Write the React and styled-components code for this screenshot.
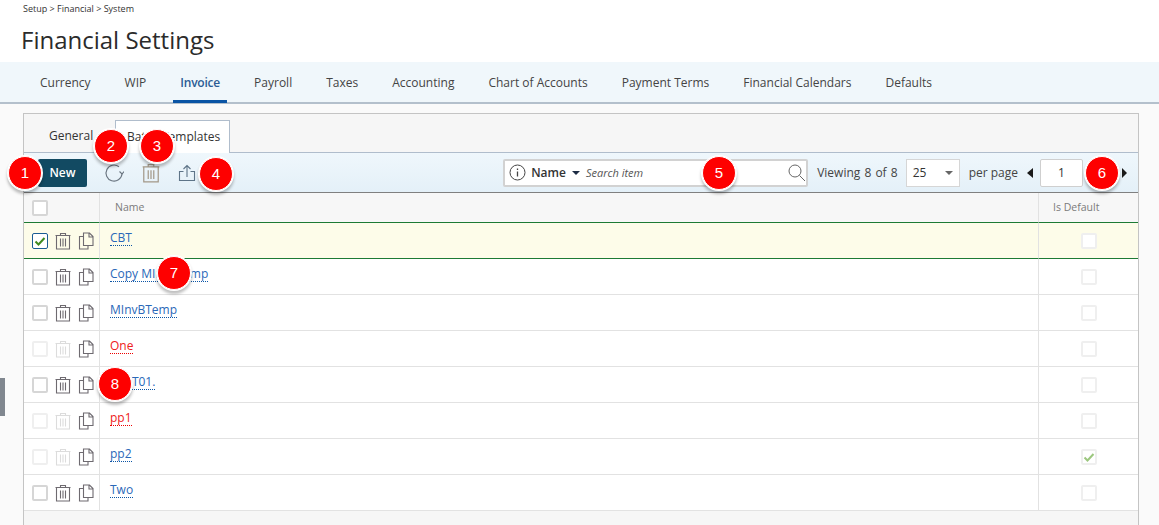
import React from "react";
import styled, { createGlobalStyle } from "styled-components";

const GlobalStyle = createGlobalStyle`
  html, body {
    margin: 0;
    padding: 0;
    background: #fff;
    font-family: "Open Sans", sans-serif;
    color: #333;
    overflow: hidden;
  }
  * { box-sizing: border-box; }
`;

const Page = styled.div`
  position: relative;
  width: 1159px;
  height: 525px;
  overflow: hidden;
`;

const Header = styled.header`
  height: 62px;
  padding: 2px 0 0 21px;
  background: #fff;
`;

const Crumbs = styled.div`
  padding-left: 2px;
  font-size: 9px;
  line-height: 13px;
  color: #333;
`;

const Title = styled.h1`
  margin: 8px 0 0;
  font-size: 24px;
  line-height: 33px;
  font-weight: 400;
  color: #2b2b2b;
`;

const TopNav = styled.nav`
  display: flex;
  height: 42px;
  padding-left: 33px;
  gap: 20px;
  background: #f0f7fb;
  border-bottom: 2px solid #b4c0cc;
`;

const TopItem = styled.div`
  height: 41px;
  padding: 13px 7px 0;
  font-size: 12px;
  line-height: 16px;
  font-weight: ${(p) => (p.$active ? 600 : 400)};
  letter-spacing: ${(p) => (p.$active ? "-0.2px" : "0")};
  color: ${(p) => (p.$active ? "#2b5c94" : "#444")};
  border-bottom: 3px solid ${(p) => (p.$active ? "#0b55a5" : "transparent")};
`;

const Body = styled.div`
  height: 421px;
  padding: 9px 20px 0 23px;
  background: #fafafa;
`;

const Panel = styled.section`
  height: 412px;
  background: #f6f6f6;
  border: 1px solid #c4c4c4;
  border-bottom: none;
`;

const SubTabs = styled.div`
  display: flex;
  height: 38px;
  padding: 6px 0 0 25px;
`;

const SubTab = styled.div`
  height: 32px;
  padding: 8px 0 0;
  font-size: 12px;
  line-height: 16px;
  color: #333;
  width: ${(p) => p.$width}px;
  ${(p) =>
    p.$active &&
    `
    margin-bottom: -1px;
    height: 33px;
    padding-left: 11px;
    background: #fff;
    border: 1px solid #b0bdcc;
    border-bottom: none;
    position: relative;
    z-index: 1;
  `}
`;

const Toolbar = styled.div`
  display: flex;
  align-items: center;
  height: 41px;
  padding: 0 11px 0 14px;
  background: linear-gradient(#eff7fc, #e4f0f8);
  border-top: 1px solid #b0bdcc;
  border-bottom: 1px solid #808080;
`;

const NewButton = styled.button`
  width: 49px;
  height: 28px;
  padding: 0;
  border: none;
  border-radius: 2px;
  background: #124a62;
  color: #fff;
  font: 600 12px "Open Sans", sans-serif;
`;

const ToolIcon = styled.svg`
  flex: none;
  width: 20px;
  height: 20px;
  margin-left: ${(p) => p.$gap}px;
  fill: none;
  stroke: ${(p) => p.$color || "#6a7580"};
  stroke-width: 1.1;
`;

const Spacer = styled.div`
  flex: 1;
`;

const SearchBox = styled.div`
  display: flex;
  align-items: center;
  width: 305px;
  height: 28px;
  padding-left: 4px;
  background: #fff;
  border: 2px solid #d2d2d2;
  border-radius: 2px;
`;

const FieldName = styled.span`
  margin-left: 5px;
  font-size: 12px;
  font-weight: 600;
  color: #333;
`;

const Caret = styled.span`
  display: inline-block;
  width: 0;
  height: 0;
  margin-left: ${(p) => p.$gap || 6}px;
  border-left: 4px solid transparent;
  border-right: 4px solid transparent;
  border-top: 4px solid ${(p) => p.$color || "#1d2c44"};
`;

const SearchText = styled.span`
  flex: 1;
  margin-left: 6px;
  font-size: 11px;
  font-style: italic;
  color: #555;
`;

const Viewing = styled.span`
  margin-left: 9px;
  font-size: 12px;
  word-spacing: 1px;
  color: #444;
`;

const PageSize = styled.div`
  display: flex;
  align-items: center;
  justify-content: space-between;
  width: 54px;
  height: 28px;
  margin-left: 8px;
  padding: 0 6px;
  background: #fff;
  border: 1px solid #d6d6d6;
  font-size: 12px;
  color: #333;
`;

const PerPage = styled.span`
  margin-left: 9px;
  font-size: 12px;
  color: #444;
`;

const Arrow = styled.span`
  flex: none;
  width: 0;
  height: 0;
  margin-left: ${(p) => p.$gap}px;
  border-top: 5px solid transparent;
  border-bottom: 5px solid transparent;
  ${(p) => (p.$left ? "border-right: 6px solid #1a1a1a;" : "border-left: 5px solid #1a1a1a;")}
`;

const PageInput = styled.div`
  width: 43px;
  height: 28px;
  margin-left: 7px;
  background: #fff;
  border: 1px solid #cfcfcf;
  border-radius: 2px;
  text-align: center;
  font-size: 12px;
  line-height: 26px;
  color: #333;
`;

const Grid = styled.div`
  display: grid;
  grid-template-columns: 75px 1fr 100px;
`;

const HeadCell = styled.div`
  height: 29px;
  padding: ${(p) => p.$pad || "6px 0 0 14px"};
  font-size: 10.5px;
  line-height: 16px;
  color: #7b7b7b;
  background: #f7f7f7;
  border-left: ${(p) => (p.$first ? "none" : "1px solid #e2e2e2")};
`;

const Row = styled.div`
  display: contents;
`;

const Cell = styled.div`
  display: flex;
  align-items: center;
  justify-content: ${(p) => p.$justify || "flex-start"};
  height: 36px;
  background: ${(p) => (p.$selected ? "#fdfce9" : "#fff")};
  border-top: 1px solid ${(p) => (p.$selected ? "#1d7a34" : "#e2e2e2")};
  border-left: ${(p) => (p.$first ? "none" : "1px solid #e2e2e2")};
  padding-left: ${(p) => p.$pad || 0}px;
  ${(p) => p.$last && "border-bottom: 1px solid #e2e2e2; height: 37px;"}
  ${(p) => p.$afterSelected && "border-top-color: #1d7a34;"}
`;

const Box = styled.span`
  display: inline-flex;
  align-items: center;
  justify-content: center;
  flex: none;
  width: 16px;
  height: 16px;
  background: #fff;
  border: ${(p) => (p.$checked ? "1px solid #1b5c94" : `2px solid ${p.$dim ? "#efefef" : "#d6d6d6"}`)};
  border-radius: 2px;
`;

const RowIcon = styled.svg`
  flex: none;
  width: 16px;
  height: 18px;
  margin-left: ${(p) => p.$gap}px;
  fill: none;
  stroke: ${(p) => (p.$dim ? "#dcdcdc" : "#6e6a70")};
  stroke-width: 1.1;
`;

const NameLink = styled.span`
  margin-top: -6px;
  font-size: 12px;
  line-height: 15px;
  color: ${(p) => (p.$red ? "#ee2020" : "#2a68b8")};
  border-bottom: 1px dotted ${(p) => (p.$red ? "#ee0000" : "#0b55a5")};
`;

const SideHandle = styled.div`
  position: absolute;
  left: 0;
  top: 378px;
  width: 5px;
  height: 38px;
  background: #80878f;
`;

const Badge = styled.div`
  position: absolute;
  left: ${(p) => p.$x - 17}px;
  top: ${(p) => p.$y - 17}px;
  width: 34px;
  height: 34px;
  border-radius: 50%;
  background: #fe0000;
  border: 1px solid #fff;
  box-shadow: 0 0 0 1px #fff, 0 3px 3px 1px rgba(0, 0, 0, 0.25);
  color: #fff;
  font: 15px/32px "Liberation Sans", sans-serif;
  text-align: center;
  z-index: 5;
`;

const Trash = ({ dim, gap, color, as: Comp = RowIcon }) => (
  <Comp viewBox="0 0 16 18" $dim={dim} $gap={gap} $color={color}>
    <path d="M0.500 3.500h15M5.500 3.500v-2h5v2M1.500 3.500v13.500h13V3.500" />
    <path d="M5.500 6.500v8M8 6.500v8M10.500 6.500v8" />
  </Comp>
);

const Copy = ({ gap }) => (
  <RowIcon viewBox="0 0 16 18" $gap={gap}>
    <path d="M5.500 4.500H1.500v12.500h8.500v-3.500" />
    <path d="M5.500 13.500V1h6l3.500 3.500v9zM11 1v4h4" />
  </RowIcon>
);

const Check = ({ color, size = 12 }) => (
  <svg width={size} height={size} viewBox="0 0 12 12">
    <path d="M1.500 6.500L4.500 9.500L10.500 3" fill="none" stroke={color} strokeWidth="2" />
  </svg>
);

const navItems = ["Currency", "WIP", "Invoice", "Payroll", "Taxes", "Accounting", "Chart of Accounts", "Payment Terms", "Financial Calendars", "Defaults"];

const rows = [
  { name: "CBT", selected: true },
  { name: "Copy MInvBTemp" },
  { name: "MInvBTemp" },
  { name: "One", red: true, dim: true },
  { name: "MIBT01." },
  { name: "pp1", red: true, dim: true },
  { name: "pp2", dim: true, isDefault: true },
  { name: "Two" },
];

const badges = [
  [1, 25, 173], [2, 111, 146], [3, 157, 146], [4, 216, 174], [5, 719, 173], [6, 1102, 173],
  [7, 174, 273], [8, 115, 384],
];

export default function App() {
  return (
    <Page>
      <GlobalStyle />
      <Header>
        <Crumbs>Setup &gt; Financial &gt; System</Crumbs>
        <Title>Financial Settings</Title>
      </Header>
      <TopNav>
        {navItems.map((item) => (
          <TopItem key={item} $active={item === "Invoice"}>{item}</TopItem>
        ))}
      </TopNav>
      <Body>
        <Panel>
          <SubTabs>
            <SubTab $width={66}>General</SubTab>
            <SubTab $width={115} $active>Batch Templates</SubTab>
          </SubTabs>
          <Toolbar>
            <NewButton>New</NewButton>
            <ToolIcon viewBox="0 0 20 20" $gap={17}>
              <path d="M15 3.800a8 8 0 1 0 3 7.200" />
              <path d="M15.500 8.500L18 11L20 8.500" />
            </ToolIcon>
            <Trash as={ToolIcon} gap={17} color="#a39888" />
            <ToolIcon viewBox="0 0 20 20" $gap={16} $color="#5e7488">
              <path d="M6.500 8.500H2.500v9h15v-9h-4" />
              <path d="M10 14V2.500M6.500 6L10 2.500L13.500 6" />
            </ToolIcon>
            <Spacer />
            <SearchBox>
              <svg width="17" height="17" viewBox="0 0 17 17">
                <circle cx="8.500" cy="8.500" r="7.500" fill="none" stroke="#444" />
                <path d="M8.500 7.500v5M8.500 4.500v1.500" stroke="#444" strokeWidth="1.300" />
              </svg>
              <FieldName>Name</FieldName>
              <Caret />
              <SearchText>Search item</SearchText>
              <svg width="20" height="20" viewBox="0 0 20 20">
                <circle cx="9" cy="8" r="6" fill="none" stroke="#666" />
                <path d="M13.500 12.500L19 18" stroke="#666" />
              </svg>
            </SearchBox>
            <Viewing>Viewing 8 of 8</Viewing>
            <PageSize>25<Caret $color="#666" /></PageSize>
            <PerPage>per page</PerPage>
            <Arrow $left $gap={9} />
            <PageInput>1</PageInput>
            <Arrow $gap={39} />
          </Toolbar>
          <Grid>
            <HeadCell $first $pad="7px 0 0 8px"><Box /></HeadCell>
            <HeadCell $pad="6px 0 0 15px">Name</HeadCell>
            <HeadCell $pad="6px 0 0 14px">Is Default</HeadCell>
            {rows.map((row, i) => {
              const shared = {
                $selected: row.selected,
                $last: i === rows.length - 1,
                $afterSelected: i > 0 && rows[i - 1].selected,
              };
              return (
                <Row key={row.name}>
                  <Cell {...shared} $first $pad={8}>
                    <Box $checked={row.selected} $dim={row.dim}>
                      {row.selected && <Check color="#3e8a1e" />}
                    </Box>
                    <Trash dim={row.dim} gap={7} />
                    <Copy gap={7} />
                  </Cell>
                  <Cell {...shared} $pad={10}>
                    <NameLink $red={row.red}>{row.name}</NameLink>
                  </Cell>
                  <Cell {...shared} $justify="center">
                    <Box $dim>{row.isDefault && <Check color="#9cc77f" />}</Box>
                  </Cell>
                </Row>
              );
            })}
          </Grid>
        </Panel>
      </Body>
      <SideHandle />
      {badges.map(([n, x, y]) => (
        <Badge key={n} $x={x} $y={y}>{n}</Badge>
      ))}
    </Page>
  );
}
